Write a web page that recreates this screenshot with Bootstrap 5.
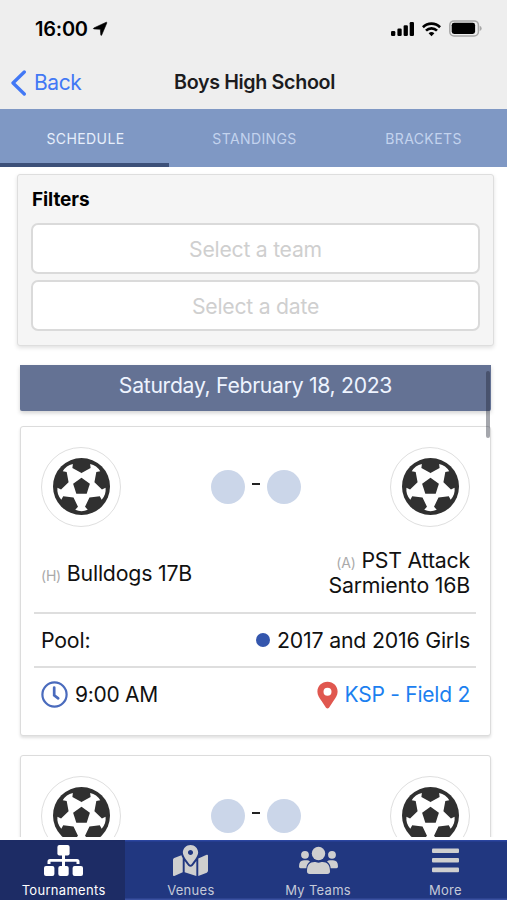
<!DOCTYPE html>
<html lang="en">
<head>
<meta charset="utf-8">
<meta name="viewport" content="width=device-width, initial-scale=1">
<title>Boys High School</title>
<link href="https://cdn.jsdelivr.net/npm/bootstrap@5.3.0/dist/css/bootstrap.min.css" rel="stylesheet">
<style>
  body { font-family: Inter, "Liberation Sans", sans-serif; background: #fff; color: #111; height: 900px; overflow: hidden; font-size: 21.5px; line-height: 26px; }
  svg { display: block; flex: none; }
  .app-top { background: #eee; height: 109px; flex: none; }
  .status-line { height: 57px; padding: 0 25px 0 35px; }
  .clock { font-size: 20px; font-weight: 600; color: #000; letter-spacing: -.25px; }
  .title-line { height: 50px; padding-left: 11px; }
  .back-link { color: #4278f5; width: 163px; gap: 8px; font-size: 21px; letter-spacing: -.4px; padding-top: 1px; }
  .page-title { font-size: 19.7px; font-weight: 600; letter-spacing: -.35px; color: #1c1c1e; }
  .tab-strip { height: 58px; flex: none; background: #7f98c4; }
  .tab-strip a { font-size: 14px; letter-spacing: .4px; color: #c3d3ee; text-decoration: none; border-bottom: 4px solid transparent; padding: 5px 0 0 2px; }
  .tab-strip a.current { color: #e6eefb; border-color: #3c5079; }
  .filter-box { margin: 7px 13px 0 17px; height: 172px; padding: 12px 13px 12px 13px; background: #f5f5f5; border: 1px solid #dedede; border-radius: 3px; box-shadow: 0 2px 4px rgba(0,0,0,.12); flex: none; }
  .filter-box h2 { font-size: 19px; line-height: 25px; font-weight: 700; letter-spacing: -.1px; color: #000; margin: 0 0 11px 1px; }
  .pick { height: 51px; border: 2px solid #dadada; border-radius: 7px; background: #fff; color: #cfcfcf; text-align: center; font-size: 21.2px; letter-spacing: -.25px; padding: 0; }
  .pick + .pick { margin-top: 6px; }
  .feed { padding: 19px 16px 0 20px; height: 491px; flex: none; overflow: hidden; position: relative; }
  .day-bar { height: 46px; background: #647294; color: #eef4ff; padding-top: 7px; box-shadow: 0 2px 4px rgba(0,0,0,.18); border-radius: 0 0 2px 2px; font-size: 21.2px; letter-spacing: -.3px; }
  .scroll-thumb { position: absolute; right: 17px; top: 25px; width: 4.5px; height: 67px; border-radius: 3px; background: rgba(30,35,50,.4); }
  .game { margin-top: 15px; height: 310px; border: 1px solid #dcdcdc; border-radius: 3px; box-shadow: 0 2px 3px rgba(0,0,0,.12); padding: 19.5px 14px 0 13px; background: #fff; }
  .game + .game { margin-top: 19px; }
  .inset { padding: 0 6px 0 7px; }
  .crest { width: 80px; height: 80px; border: 1.5px solid #dfdfdf; border-radius: 50%; }
  .score-dot { width: 34px; height: 34px; border-radius: 50%; background: #cbd6e9; }
  .dash { width: 8px; height: 2px; background: #222; margin: 0 7px 5px; }
  .names { height: 85.5px; padding-top: 8px; font-size: 21.3px; line-height: 25.5px; letter-spacing: -.2px; }
  .side { font-size: 14px; line-height: 1; color: #aaa; letter-spacing: -.2px; }
  .info { height: 54.2px; border-top: 2px solid #dedede; letter-spacing: -.2px; font-size: 21.3px; }
  .info:last-child { padding-top: 1px; }
  .pool-dot { width: 14px; height: 14px; border-radius: 50%; background: #3456ad; margin-right: 7px; }
  .start-time { font-size: 21px; letter-spacing: -.3px; gap: 7px; }
  .venue { color: #1b80f0; gap: 7px; font-size: 21px; letter-spacing: -.25px; }
  .app-tabs { height: 60px; flex: none; background: #213780; box-shadow: inset 0 1.5px 0 #2b45a0, inset 0 -1.5px 0 #3a50a0; margin-top: 3px; }
  .app-tabs a { color: #c5cad8; text-decoration: none; font-size: 13px; line-height: 16px; padding: 4px 0 0 2px; letter-spacing: .3px; }
  .app-tabs a:nth-child(n+2) { padding-left: 4px; }
  .app-tabs a.current { color: #fff; background: #1d2c65; }
  .app-tabs svg { fill: #cfcfcf; height: 33px; margin-bottom: 5px; }
  .app-tabs a.current svg { fill: #fff; }
</style>
</head>
<body class="d-flex flex-column">
<svg width="0" height="0" class="position-absolute" aria-hidden="true">
  <defs><path id="arm" d="M0 0-23.5-32.4-10.4-60-18.4-68.6Q0-77 18.4-68.6L10.4-60 23.5-32.4z"/></defs>
  <symbol id="ball" viewBox="-84 -84 168 168">
    <circle r="84" fill="#303030"/>
    <g fill="#fff"><path d="M0-40 38-12.4 23.5 32.4-23.5 32.4-38-12.4z"/><use href="#arm" transform="rotate(36)"/><use href="#arm" transform="rotate(108)"/><use href="#arm" transform="rotate(180)"/><use href="#arm" transform="rotate(252)"/><use href="#arm" transform="rotate(324)"/></g>
    <path fill="#303030" d="M0-26 24.7-8 15.3 21-15.3 21-24.7-8z"/>
  </symbol>
</svg>

<header class="app-top">
  <div class="status-line d-flex align-items-center">
    <span class="clock">16:00</span>
    <svg class="ms-1" width="16" height="16" viewBox="0 0 16 16"><path d="M14.300 1.200q.7 0 .5.800L9.700 14q-.6 1-.9 0L8.300 8.300 1.900 7.900q-1-.3-.1-.9z" stroke="#000" stroke-width=".6"/></svg>
    <div class="d-flex align-items-center ms-auto">
      <svg width="24" height="16" viewBox="0 0 24 16"><rect x="0" y="10" width="4.300" height="5" rx="1.200"/><rect x="6.400" y="7.500" width="4.300" height="7.500" rx="1.200"/><rect x="12.600" y="4.200" width="4.300" height="10.800" rx="1.200"/><rect x="18.700" y="1" width="4.300" height="14" rx="1.200"/></svg>
      <svg style="margin:0 8px 0 7px" width="19" height="16" viewBox="0 0 19 16" fill="none" stroke="#000" stroke-width="2.700"><path d="M.9 6.200a12.300 12.300 0 0 1 17.200 0M4 9.600a7.900 7.900 0 0 1 11 0"/><path d="M6.600 12.200a4.300 4.300 0 0 1 5.800 0L9.500 15.200z" fill="#000" stroke="none"/></svg>
      <svg width="33" height="17" viewBox="0 0 33 17"><rect x=".8" y=".9" width="28.600" height="15" rx="4.200" fill="none" stroke="#a8a8a8" stroke-width="1.500"/><rect x="2.700" y="2.800" width="23.400" height="11.200" rx="2.400"/><path d="M30.700 5.800q2 .8 2 2.600t-2 2.600z" fill="#a8a8a8"/></svg>
    </div>
  </div>
  <div class="title-line d-flex align-items-center">
    <a class="back-link d-flex align-items-center text-decoration-none" href="#"><svg width="15" height="26" viewBox="0 0 15 26" fill="none" stroke="#4278f5" stroke-width="3.300" stroke-linecap="round" stroke-linejoin="round"><path d="M13.300 2 2 13l11.300 11"/></svg>Back</a>
    <span class="page-title">Boys High School</span>
  </div>
</header>

<nav class="tab-strip row g-0">
  <a class="col current d-flex align-items-center justify-content-center" href="#">SCHEDULE</a>
  <a class="col d-flex align-items-center justify-content-center" href="#">STANDINGS</a>
  <a class="col d-flex align-items-center justify-content-center" href="#">BRACKETS</a>
</nav>

<section class="filter-box">
  <h2>Filters</h2>
  <button class="pick d-block w-100" type="button">Select a team</button>
  <button class="pick d-block w-100" type="button">Select a date</button>
</section>

<main class="feed">
  <div class="day-bar text-center">Saturday, February 18, 2023</div>
  <article class="game">
    <div class="inset d-flex justify-content-between align-items-center">
      <div class="crest d-flex align-items-center justify-content-center"><svg width="57" height="57"><use href="#ball"/></svg></div>
      <div class="d-flex align-items-center"><span class="score-dot"></span><span class="dash"></span><span class="score-dot"></span></div>
      <div class="crest d-flex align-items-center justify-content-center"><svg width="57" height="57"><use href="#ball"/></svg></div>
    </div>
    <div class="names inset d-flex justify-content-between align-items-center">
      <div><span class="side">(H)</span> Bulldogs 17B</div>
      <div class="text-end"><span class="side">(A)</span> PST Attack<br>Sarmiento 16B</div>
    </div>
    <div class="info inset d-flex justify-content-between align-items-center">
      <span>Pool:</span>
      <span class="d-flex align-items-center"><span class="pool-dot"></span>2017 and 2016 Girls</span>
    </div>
    <div class="info inset d-flex justify-content-between align-items-center">
      <span class="start-time d-flex align-items-center"><svg width="27" height="27" viewBox="0 0 27 27" fill="none" stroke="#4a6bbd"><circle cx="13.500" cy="13.500" r="12.100" stroke-width="2.200"/><path d="M13.200 6.500v7.800l4 3" stroke-width="2.700" stroke-linecap="round"/></svg>9:00 AM</span>
      <a class="venue d-flex align-items-center text-decoration-none" href="#"><svg width="21" height="28" viewBox="0 0 21 28"><path fill="#e0574f" fill-rule="evenodd" d="M10.500.8C4.800.8.4 5.100.4 10.700c0 3.500 2 5.900 4.200 9.400l4.400 6.700q1.500 1.600 3 0l4.400-6.700c2.200-3.500 4.200-5.900 4.200-9.400C20.600 5.100 16.200.8 10.500.8zm0 6a4 4 0 1 1 0 8 4 4 0 0 1 0-8z"/></svg>KSP - Field 2</a>
    </div>
  </article>
  <article class="game">
    <div class="inset d-flex justify-content-between align-items-center">
      <div class="crest d-flex align-items-center justify-content-center"><svg width="57" height="57"><use href="#ball"/></svg></div>
      <div class="d-flex align-items-center"><span class="score-dot"></span><span class="dash"></span><span class="score-dot"></span></div>
      <div class="crest d-flex align-items-center justify-content-center"><svg width="57" height="57"><use href="#ball"/></svg></div>
    </div>
  </article>
  <div class="scroll-thumb"></div>
</main>

<footer class="app-tabs row g-0">
  <a class="col current d-flex flex-column align-items-center" href="#"><svg width="39" viewBox="0 0 39 33"><rect x="13.400" y="1" width="12.200" height="10.500" rx="2"/><rect x="0" y="22" width="10.400" height="10" rx="2"/><rect x="14.300" y="22" width="10.400" height="10" rx="2"/><rect x="28.600" y="22" width="10.400" height="10" rx="2"/><path d="M18 11h3v4h12q2.500 0 2.500 2.500V20h-3v-2.200H21V22h-3v-4.200H6.500V20h-3v-2.500Q3.500 15 6 15h12z"/></svg>Tournaments</a>
  <a class="col d-flex flex-column align-items-center" href="#"><svg width="35" viewBox="0 -14 576 541"><path d="M288 0c-69.590 0-126 56.410-126 126 0 56.260 82.350 158.800 113.900 196.020 6.390 7.540 17.820 7.540 24.200 0C331.650 284.800 414 182.260 414 126 414 56.410 357.590 0 288 0zm0 168c-23.200 0-42-18.800-42-42s18.800-42 42-42 42 18.800 42 42-18.800 42-42 42zM20.120 215.950A32.006 32.006 0 0 0 0 245.660v250.320c0 11.320 11.430 19.060 21.940 14.860L160 448V214.920c-8.840-15.980-16.070-31.540-21.250-46.420L20.120 215.950zM288 359.670c-14.070 0-27.380-6.180-36.510-16.960-19.660-23.200-40.570-49.620-59.490-76.720v182l192 64V266c-18.920 27.090-39.820 53.520-59.490 76.720-9.130 10.770-22.440 16.950-36.510 16.950zm266.060-198.510L416 224v288l139.880-55.950A31.996 31.996 0 0 0 576 426.340V176.020c0-11.320-11.430-19.060-21.940-14.860z"/></svg>Venues</a>
  <a class="col d-flex flex-column align-items-center" href="#"><svg width="39" viewBox="0 0 39 33"><circle cx="19.500" cy="9.500" r="6.700"/><circle cx="6" cy="10.800" r="3.900"/><circle cx="33" cy="10.800" r="3.900"/><path d="M0 22.500q0-6.300 5-6.300h3q1.800 0 3 1.200-3.200 2-3.700 6.800H1.500Q0 24.200 0 22.500zM39 22.500q0-6.300-5-6.300h-3q-1.800 0-3 1.200 3.200 2 3.700 6.800h5.800q1.500 0 1.500-1.700zM8 27.300c0-6.500 2.800-9.300 7.500-9.300 1.500 0 2 .7 4 .7s2.500-.7 4-.7c4.700 0 7.500 2.800 7.500 9.300q0 2.700-2.700 2.700H10.700Q8 30 8 27.300z"/></svg>My Teams</a>
  <a class="col d-flex flex-column align-items-center" href="#"><svg width="27" viewBox="0 0 27 33"><rect y="4.500" width="27" height="4.600" rx="1"/><rect y="14" width="27" height="4.600" rx="1"/><rect y="23.600" width="27" height="4.600" rx="1"/></svg>More</a>
</footer>
<script src="https://cdn.jsdelivr.net/npm/bootstrap@5.3.0/dist/js/bootstrap.bundle.min.js"></script>
</body>
</html>
